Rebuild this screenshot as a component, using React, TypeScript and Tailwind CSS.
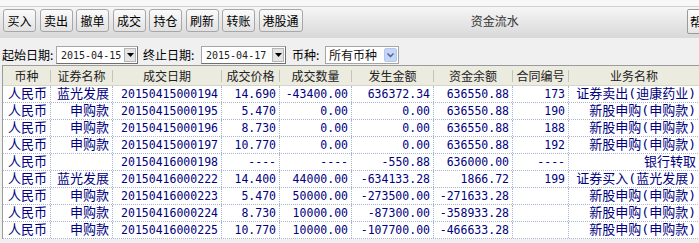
import React from "react";

const rows = [
  ["人民币", "蓝光发展", "20150415000194", "14.690", "-43400.00", "636372.34", "636550.88", "173", "证券卖出(迪康药业)"],
  ["人民币", "申购款", "20150415000195", "5.470", "0.00", "0.00", "636550.88", "190", "新股申购(申购款)"],
  ["人民币", "申购款", "20150415000196", "8.730", "0.00", "0.00", "636550.88", "188", "新股申购(申购款)"],
  ["人民币", "申购款", "20150415000197", "10.770", "0.00", "0.00", "636550.88", "192", "新股申购(申购款)"],
  ["人民币", "", "20150416000198", "----", "----", "-550.88", "636000.00", "----", "银行转取"],
  ["人民币", "蓝光发展", "20150416000222", "14.400", "44000.00", "-634133.28", "1866.72", "199", "证券买入(蓝光发展)"],
  ["人民币", "申购款", "20150416000223", "5.470", "50000.00", "-273500.00", "-271633.28", "", "新股申购(申购款)"],
  ["人民币", "申购款", "20150416000224", "8.730", "10000.00", "-87300.00", "-358933.28", "", "新股申购(申购款)"],
  ["人民币", "申购款", "20150416000225", "10.770", "10000.00", "-107700.00", "-466633.28", "", "新股申购(申购款)"],
];

const cols = [
  { w: "w-[48px]", title: "币种", cjk: true },
  { w: "w-[62px]", title: "证券名称", cjk: true },
  { w: "w-[109px]", title: "成交日期", cjk: false },
  { w: "w-[58px]", title: "成交价格", cjk: false },
  { w: "w-[72px]", title: "成交数量", cjk: false },
  { w: "w-[82px]", title: "发生金额", cjk: false },
  { w: "w-[79px]", title: "资金余额", cjk: false },
  { w: "w-[56px]", title: "合同编号", cjk: false },
  { w: "w-[131px]", title: "业务名称", cjk: true },
];

const tools = ["买入", "卖出", "撤单", "成交", "持仓", "刷新", "转账"];

function ToolButton({ label, wide }: { label: string; wide?: boolean }) {
  return (
    <div
      className={`flex h-[23px] shrink-0 items-center justify-center rounded-[3px] border border-[#a7a7a7] bg-linear-to-b from-[#fbfbfb] to-[#e2e2e2] text-[12px] text-black ${
        wide ? "w-[44px]" : "w-[33px]"
      }`}
    >
      {label}
    </div>
  );
}

function DateSelect({ w, text }: { w: string; text: string }) {
  return (
    <div className={`flex h-[18px] items-center border border-[#a6a6a6] border-r-[#6f6f6f] border-b-[#6f6f6f] bg-white pl-[4px] pr-[1px] ${w}`}>
      <span className="flex-1 font-['DejaVu_Sans_Mono',monospace] text-[10px] text-[#222]">{text}</span>
      <div className="flex h-[14px] w-[12px] items-center justify-center border border-[#b5b5b5] bg-[#e4e4e4]">
        <svg width="7" height="4" viewBox="0 0 7 4">
          <path d="M0 0h7L3.5 4z" fill="#000" />
        </svg>
      </div>
    </div>
  );
}

export default function App() {
  return (
    <div className="h-[243px] w-[699px] overflow-hidden bg-[#f0f0f0] font-['Noto_Sans_CJK_SC',sans-serif]">
      <div className="h-[6px] bg-[#f8f8f8]" />

      {/* toolbar */}
      <div className="flex h-[32px] w-[727px] items-start border-t border-[#d2d2d2] bg-linear-to-b from-[#f6f6f6] to-[#d8d8d8] pt-[2px]">
        <div className="flex gap-[3.5px] pl-[3px]">
          {tools.map((t) => (
            <ToolButton key={t} label={t} />
          ))}
          <ToolButton label="港股通" wide />
        </div>
        <div className="flex h-[23px] flex-1 items-center justify-center text-[12px] text-[#333]">资金流水</div>
        <div className="flex h-[25px] w-[40px] shrink-0 items-center rounded-[2px] border border-[#9a9a9a] bg-linear-to-b from-[#fdfdfd] to-[#e6e6e6] pl-[2px] text-[12px] text-black">
          帮助
        </div>
      </div>

      {/* filter row */}
      <div className="flex h-[27px] items-end pb-[1px] text-[12px] text-black">
        <div className="flex h-[18px] w-[56px] items-center pl-[2px]">起始日期:</div>
        <DateSelect w="w-[82px]" text="2015-04-15" />
        <div className="ml-[5px] flex h-[18px] w-[58px] items-center">终止日期:</div>
        <DateSelect w="w-[85px]" text="2015-04-17" />
        <div className="ml-[6px] flex h-[18px] w-[31px] items-center">币种:</div>
        <div className="ml-[2px] flex h-[18px] w-[74px] items-center border border-[#a6a6a6] bg-white pl-[3px] pr-[1px]">
          <span className="flex-1 text-[12px] text-[#111]">所有币种</span>
          <div className="flex h-[14px] w-[13px] items-center justify-center rounded-[2px] border border-[#b6c7ee] bg-[#c6d6f8]">
            <svg width="7" height="5" viewBox="0 0 7 5">
              <path d="M0.5 0.5L3.5 3.5L6.5 0.5" stroke="#4d6185" strokeWidth="1.4" fill="none" />
            </svg>
          </div>
        </div>
      </div>

      {/* table */}
      <div className="ml-[2px] w-[700px] border-l border-t border-[#9b9b9b] bg-white">
        <div className="flex h-[20px] border-b border-[#d6d5c8] bg-[#ecebdf]">
          {cols.map((c) => (
            <div key={c.title} className={`flex shrink-0 items-center ${c.w}`}>
              <span className="flex-1 text-center text-[12px] text-[#222]">{c.title}</span>
              <span className="h-[12px] w-px bg-[#c4c3b4]" />
            </div>
          ))}
        </div>
        {rows.map((r) => (
          <div key={r[2]} className="flex h-[17px] border-b border-dotted border-[#a8b5d2]">
            {r.map((v, i) => (
              <div
                key={i}
                className={`shrink-0 truncate border-r border-dotted border-[#a8b5d2] pr-[3px] text-right leading-[16px] text-[#000080] ${cols[i].w} ${
                  cols[i].cjk
                    ? "font-['DejaVu_Sans_Mono','Noto_Sans_CJK_SC',monospace] text-[13px]"
                    : "font-['DejaVu_Sans_Mono',monospace] text-[11.5px]"
                }`}
              >
                {v}
              </div>
            ))}
          </div>
        ))}
      </div>
    </div>
  );
}
